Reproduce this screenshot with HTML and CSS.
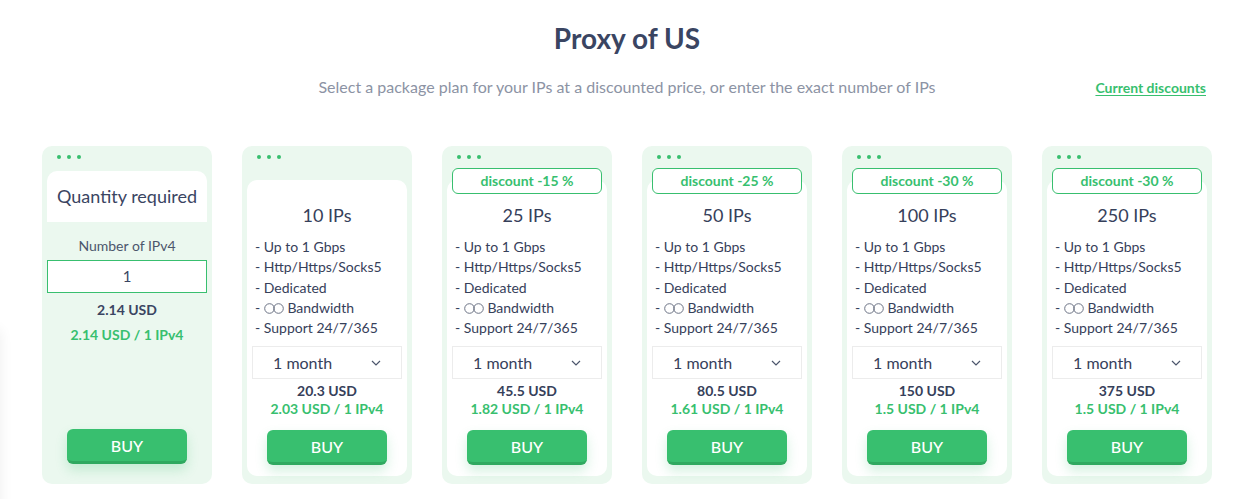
FILE: index.html
```html
<!DOCTYPE html>
<html lang="en">
<head>
<meta charset="utf-8">
<title>Proxy of US</title>
<link rel="stylesheet" href="styles.css">
</head>
<body>
<div class="edge-shadow"></div>
<header class="head">
  <h1 class="title">Proxy of US</h1>
  <div class="sub-row">
    <span></span>
    <p class="subtitle">Select a package plan for your IPs at a discounted price, or enter the exact number of IPs</p>
    <a class="discounts" href="#">Current discounts</a>
  </div>
</header>

<main class="cards">
  <section class="card card-qty">
    <div class="dots"><i></i><i></i><i></i></div>
    <div class="qty-head">Quantity required</div>
    <div class="qty-label">Number of IPv4</div>
    <div class="qty-input">1</div>
    <div class="qty-price">2.14 USD</div>
    <div class="qty-per">2.14 USD / 1 IPv4</div>
    <button class="buy qty-buy">BUY</button>
  </section>

  <section class="card">
    <div class="dots"><i></i><i></i><i></i></div>
    <div class="pack">
      <div class="pack-title">10 IPs</div>
      <ul class="feats">
        <li>- Up to 1 Gbps</li>
        <li>- Http/Https/Socks5</li>
        <li>- Dedicated</li>
        <li>- <svg class="inf" viewBox="0 0 20 11" width="20" height="11"><circle cx="5.5" cy="5.5" r="4.8"/><circle cx="14.5" cy="5.5" r="4.8"/></svg> Bandwidth</li>
        <li>- Support 24/7/365</li>
      </ul>
      <div class="select"><span>1 month</span><svg class="chev" viewBox="0 0 10 6" width="10" height="6"><path d="M1 1l4 4 4-4"/></svg></div>
      <div class="price">20.3 USD</div>
      <div class="per">2.03 USD / 1 IPv4</div>
      <button class="buy">BUY</button>
    </div>
  </section>

  <section class="card">
    <div class="dots"><i></i><i></i><i></i></div>
    <div class="pack">
      <div class="badge">discount -15 %</div>
      <div class="pack-title">25 IPs</div>
      <ul class="feats">
        <li>- Up to 1 Gbps</li>
        <li>- Http/Https/Socks5</li>
        <li>- Dedicated</li>
        <li>- <svg class="inf" viewBox="0 0 20 11" width="20" height="11"><circle cx="5.5" cy="5.5" r="4.8"/><circle cx="14.5" cy="5.5" r="4.8"/></svg> Bandwidth</li>
        <li>- Support 24/7/365</li>
      </ul>
      <div class="select"><span>1 month</span><svg class="chev" viewBox="0 0 10 6" width="10" height="6"><path d="M1 1l4 4 4-4"/></svg></div>
      <div class="price">45.5 USD</div>
      <div class="per">1.82 USD / 1 IPv4</div>
      <button class="buy">BUY</button>
    </div>
  </section>

  <section class="card">
    <div class="dots"><i></i><i></i><i></i></div>
    <div class="pack">
      <div class="badge">discount -25 %</div>
      <div class="pack-title">50 IPs</div>
      <ul class="feats">
        <li>- Up to 1 Gbps</li>
        <li>- Http/Https/Socks5</li>
        <li>- Dedicated</li>
        <li>- <svg class="inf" viewBox="0 0 20 11" width="20" height="11"><circle cx="5.5" cy="5.5" r="4.8"/><circle cx="14.5" cy="5.5" r="4.8"/></svg> Bandwidth</li>
        <li>- Support 24/7/365</li>
      </ul>
      <div class="select"><span>1 month</span><svg class="chev" viewBox="0 0 10 6" width="10" height="6"><path d="M1 1l4 4 4-4"/></svg></div>
      <div class="price">80.5 USD</div>
      <div class="per">1.61 USD / 1 IPv4</div>
      <button class="buy">BUY</button>
    </div>
  </section>

  <section class="card">
    <div class="dots"><i></i><i></i><i></i></div>
    <div class="pack">
      <div class="badge">discount -30 %</div>
      <div class="pack-title">100 IPs</div>
      <ul class="feats">
        <li>- Up to 1 Gbps</li>
        <li>- Http/Https/Socks5</li>
        <li>- Dedicated</li>
        <li>- <svg class="inf" viewBox="0 0 20 11" width="20" height="11"><circle cx="5.5" cy="5.5" r="4.8"/><circle cx="14.5" cy="5.5" r="4.8"/></svg> Bandwidth</li>
        <li>- Support 24/7/365</li>
      </ul>
      <div class="select"><span>1 month</span><svg class="chev" viewBox="0 0 10 6" width="10" height="6"><path d="M1 1l4 4 4-4"/></svg></div>
      <div class="price">150 USD</div>
      <div class="per">1.5 USD / 1 IPv4</div>
      <button class="buy">BUY</button>
    </div>
  </section>

  <section class="card">
    <div class="dots"><i></i><i></i><i></i></div>
    <div class="pack">
      <div class="badge">discount -30 %</div>
      <div class="pack-title">250 IPs</div>
      <ul class="feats">
        <li>- Up to 1 Gbps</li>
        <li>- Http/Https/Socks5</li>
        <li>- Dedicated</li>
        <li>- <svg class="inf" viewBox="0 0 20 11" width="20" height="11"><circle cx="5.5" cy="5.5" r="4.8"/><circle cx="14.5" cy="5.5" r="4.8"/></svg> Bandwidth</li>
        <li>- Support 24/7/365</li>
      </ul>
      <div class="select"><span>1 month</span><svg class="chev" viewBox="0 0 10 6" width="10" height="6"><path d="M1 1l4 4 4-4"/></svg></div>
      <div class="price">375 USD</div>
      <div class="per">1.5 USD / 1 IPv4</div>
      <button class="buy">BUY</button>
    </div>
  </section>
</main>
</body>
</html>
```

FILE: styles.css
```css
* { box-sizing: border-box; }
html, body { margin: 0; padding: 0; background: #fff; }
body {
  font-family: Lato, "Noto Sans", sans-serif;
  color: #36405a;
  width: 1246px;
  height: 499px;
  overflow: hidden;
  position: relative;
}
.edge-shadow {
  position: absolute;
  left: -20px;
  top: 330px;
  width: 20px;
  height: 200px;
  box-shadow: 0 0 14px rgba(0, 0, 0, 0.07);
}
.head { padding: 21px 0 0 8px; }
.title {
  margin: 0;
  text-align: center;
  font-size: 28px;
  line-height: 34px;
  font-weight: 700;
  color: #3a4562;
}
.sub-row {
  display: grid;
  grid-template-columns: 1fr auto 1fr;
  align-items: center;
  margin-top: 21px;
  height: 22px;
}
.subtitle {
  margin: 0;
  font-size: 16px;
  line-height: 22px;
  color: #8c93a4;
}
.discounts {
  justify-self: end;
  margin-right: 40px;
  font-size: 14px;
  font-weight: 700;
  color: #38bf6f;
  text-decoration: underline;
  text-underline-offset: 2px;
}
.cards {
  display: flex;
  gap: 30px;
  padding-left: 42px;
  margin-top: 48px;
}
.card {
  width: 170px;
  height: 338px;
  background: #ebf8ef;
  border-radius: 10px;
  padding: 9px 5px 8px;
  display: flex;
  flex-direction: column;
}
.dots {
  display: flex;
  gap: 6px;
  height: 4px;
  margin-left: 10px;
}
.dots i {
  width: 4px;
  height: 4px;
  border-radius: 50%;
  background: #38bf6f;
}
.qty-head {
  margin-top: 12px;
  height: 51px;
  background: #fff;
  border-radius: 10px 10px 0 0;
  text-align: center;
  font-size: 18px;
  line-height: 51px;
  color: #3a4562;
}
.qty-label {
  margin-top: 15px;
  text-align: center;
  font-size: 14px;
  line-height: 18px;
  color: #4c566c;
}
.qty-input {
  margin-top: 5px;
  height: 33px;
  border: 1px solid #38bf6f;
  background: #fff;
  text-align: center;
  font-size: 15px;
  line-height: 31px;
  color: #3a4562;
}
.qty-price {
  margin-top: 8px;
  text-align: center;
  font-size: 14px;
  line-height: 18px;
  font-weight: 700;
  color: #3a4562;
}
.qty-per {
  margin-top: 7px;
  text-align: center;
  font-size: 14px;
  line-height: 18px;
  font-weight: 700;
  color: #38bf6f;
}
.pack {
  position: relative;
  margin-top: 21px;
  flex: 1;
  background: #fff;
  border-radius: 10px;
  padding: 24px 5px 11px;
  display: flex;
  flex-direction: column;
}
.badge {
  position: absolute;
  top: -12px;
  left: 5px;
  right: 5px;
  height: 26px;
  border: 1px solid #38bf6f;
  border-radius: 6px;
  background: #fff;
  text-align: center;
  font-size: 14px;
  line-height: 24px;
  font-weight: 700;
  color: #38bf6f;
}
.pack-title {
  text-align: center;
  font-size: 18px;
  line-height: 22px;
  color: #36405a;
}
.feats {
  list-style: none;
  margin: 11px 0 0;
  padding: 0 0 0 3px;
  font-size: 14px;
  line-height: 20.25px;
  color: #36405a;
}
.inf {
  vertical-align: -1px;
  fill: none;
  stroke: #6c7385;
  stroke-width: 1;
}
.select {
  margin-top: 8px;
  height: 33px;
  border: 1px solid #ececec;
  display: flex;
  align-items: center;
  justify-content: space-between;
  padding: 0 20px 0 20px;
  font-size: 16px;
  color: #36405a;
}
.chev {
  fill: none;
  stroke: #4c566c;
  stroke-width: 1.2;
}
.price {
  margin-top: 3px;
  text-align: center;
  font-size: 14px;
  line-height: 18px;
  font-weight: 700;
  color: #36405a;
}
.per {
  text-align: center;
  font-size: 14px;
  line-height: 18px;
  font-weight: 700;
  color: #38bf6f;
}
.buy {
  display: block;
  align-self: center;
  width: 120px;
  height: 35px;
  margin-top: 12px;
  border: 0;
  border-bottom: 3px solid #2fa95f;
  border-radius: 6px;
  background: #38bf6f;
  color: #fff;
  font-family: Lato, "Noto Sans", sans-serif;
  font-size: 16px;
  font-weight: 500;
  padding: 0;
  box-shadow: 0 6px 12px rgba(56, 191, 111, 0.22);
  cursor: pointer;
}
.card-qty .qty-buy {
  margin-top: auto;
  margin-bottom: 12px;
}
```
